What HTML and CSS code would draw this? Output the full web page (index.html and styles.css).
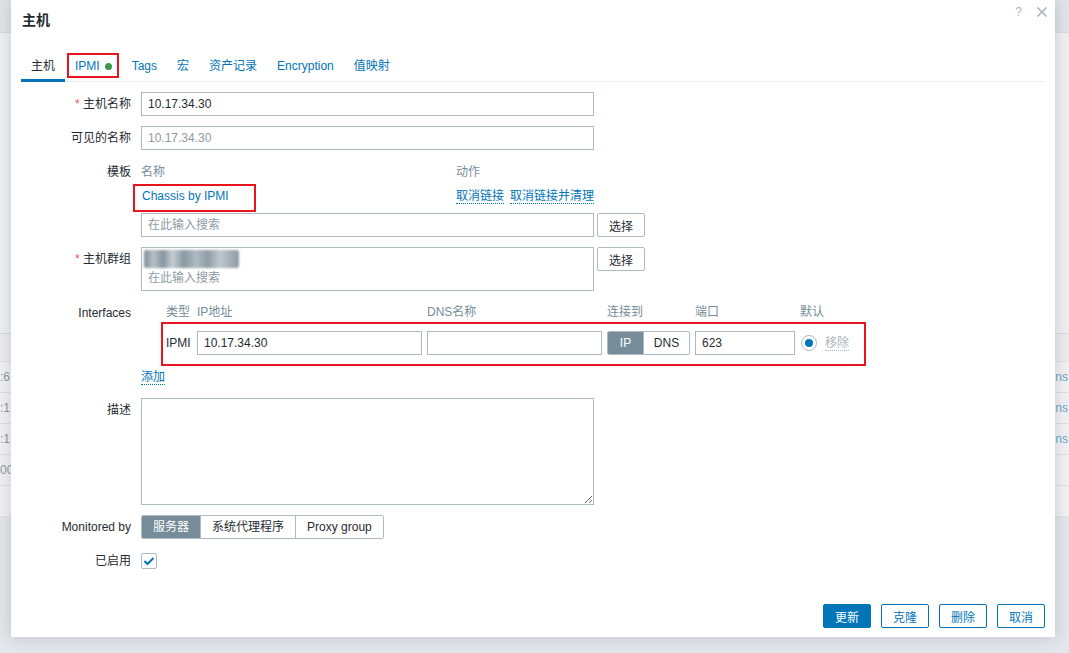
FILE: index.html
```html
<!DOCTYPE html>
<html lang="zh">
<head>
<meta charset="utf-8">
<title>主机</title>
<link rel="stylesheet" href="styles.css">
</head>
<body>
<div class="page">
  <div class="bg-header"></div>
  <div class="bg-main"></div>
  <div class="bg-thead"></div>
  <div class="bg-row"><span class="bl">:6</span><span class="br">ns</span></div>
  <div class="bg-row"><span class="bl">:1</span><span class="br">ns</span></div>
  <div class="bg-row"><span class="bl">:1</span><span class="br">ns</span></div>
  <div class="bg-row"><span class="bl">00</span><span class="br"></span></div>
  <div class="bg-row"></div>
  <div class="bg-bottom"></div>
</div>

<div class="dialog">
  <div class="dlg-head">
    <h4 class="dlg-title">主机</h4>
    <div class="dlg-ctrls">
      <span class="help">?</span>
      <svg class="close" width="12" height="12" viewBox="0 0 12 12"><path d="M1.5 1.5 L10.5 10.5 M10.5 1.5 L1.5 10.5" stroke="#a9b4bb" stroke-width="1.6" fill="none"/></svg>
    </div>
  </div>

  <div class="tabs">
    <span class="tab active">主机</span>
    <span class="tab"><span class="tab-mark">IPMI<i class="dot"></i></span></span>
    <span class="tab">Tags</span>
    <span class="tab">宏</span>
    <span class="tab">资产记录</span>
    <span class="tab">Encryption</span>
    <span class="tab">值映射</span>
  </div>

  <div class="form">
    <label class="lbl"><span class="req">*</span> 主机名称</label>
    <div class="fld"><input class="inp w453" type="text" value="10.17.34.30"></div>

    <label class="lbl">可见的名称</label>
    <div class="fld"><input class="inp w453 muted" type="text" value="10.17.34.30"></div>

    <label class="lbl lbl-tpl">模板</label>
    <div class="fld">
      <div class="tpl-head"><span class="tpl-name gray">名称</span><span class="gray">动作</span></div>
      <div class="tpl-row">
        <span class="tpl-name"><span class="marked-link"><a class="link">Chassis by IPMI</a></span></span>
        <span><a class="link dotted">取消链接</a><a class="link dotted gap6">取消链接并清理</a></span>
      </div>
      <div class="with-btn mt6">
        <input class="inp w453" type="text" placeholder="在此输入搜索">
        <button class="btn-grey">选择</button>
      </div>
    </div>

    <label class="lbl"><span class="req">*</span> 主机群组</label>
    <div class="fld">
      <div class="with-btn">
        <div class="multisel">
          <div class="chip"></div>
          <div class="ms-ph">在此输入搜索</div>
        </div>
        <button class="btn-grey">选择</button>
      </div>
    </div>

    <label class="lbl lbl-if">Interfaces</label>
    <div class="fld">
      <div class="if-head gray">
        <span class="c-type">类型</span>
        <span class="c-ip">IP地址</span>
        <span class="c-dns">DNS名称</span>
        <span class="c-conn">连接到</span>
        <span class="c-port">端口</span>
        <span class="c-def">默认</span>
      </div>
      <div class="if-row">
        <span class="c-type">IPMI</span>
        <input class="inp c-ip" type="text" value="10.17.34.30">
        <input class="inp c-dns" type="text" value="">
        <span class="c-conn seg">
          <span class="seg-item on">IP</span><span class="seg-item">DNS</span>
        </span>
        <input class="inp c-port" type="text" value="623">
        <span class="c-def">
          <span class="radio"><i></i></span>
          <a class="remove">移除</a>
        </span>
      </div>
      <div class="add-line"><a class="link dotted">添加</a></div>
    </div>

    <label class="lbl">描述</label>
    <div class="fld"><textarea class="ta"></textarea></div>

    <label class="lbl">Monitored by</label>
    <div class="fld">
      <span class="seg">
        <span class="seg-item on">服务器</span><span class="seg-item">系统代理程序</span><span class="seg-item">Proxy group</span>
      </span>
    </div>

    <label class="lbl">已启用</label>
    <div class="fld">
      <span class="check">
        <svg width="12" height="10" viewBox="0 0 12 10"><path d="M1.5 5 L4.5 8 L10.5 2" stroke="#0275b8" stroke-width="2" fill="none"/></svg>
      </span>
    </div>
  </div>

  <div class="footer">
    <button class="btn-main">更新</button>
    <button class="btn-alt">克隆</button>
    <button class="btn-alt">删除</button>
    <button class="btn-alt">取消</button>
  </div>
</div>
</body>
</html>
```

FILE: styles.css
```css
* { box-sizing: border-box; }

html, body {
  margin: 0;
  padding: 0;
}

body {
  width: 1069px;
  height: 653px;
  overflow: hidden;
  position: relative;
  font-family: "Liberation Sans", Arial, "Noto Sans CJK SC", sans-serif;
  font-size: 12px;
  color: #1f2c33;
  background: #e6e9ed;
}

/* ---------- background page (dimmed) ---------- */
.page {
  display: flex;
  flex-direction: column;
  height: 653px;
}
.bg-header { height: 33px; background: #e0e3e7; border-bottom: 1px solid #d6dadf; }
.bg-main { height: 300px; background: #eef0f2; }
.bg-thead { height: 29px; background: #eaecef; border-top: 1px solid #d3d8dd; border-bottom: 1px solid #dfe3e7; }
.bg-row {
  height: 31px;
  background: #f0f1f3;
  border-bottom: 1px solid #dde1e5;
  display: flex;
  align-items: center;
  justify-content: space-between;
  color: #8a969e;
}
.bg-row .bl { margin-left: 0; }
.bg-row .br { color: #6fa3c7; margin-right: 1px; }
.bg-bottom { flex: 1; background: #e3e6ea; }

/* ---------- dialog ---------- */
.dialog {
  position: absolute;
  left: 11px;
  top: 0;
  width: 1044px;
  height: 637px;
  background: #fff;
  box-shadow: 0 0 14px rgba(60, 70, 80, 0.22);
  display: flex;
  flex-direction: column;
}

.dlg-head {
  height: 40px;
  display: flex;
  justify-content: space-between;
  align-items: center;
  padding: 0 7px 0 11px;
}
.dlg-title {
  margin: 0;
  font-size: 14px;
  font-weight: bold;
  color: #1f2c33;
  position: relative;
  top: -1px;
}
.dlg-ctrls {
  align-self: flex-start;
  padding-top: 6px;
  display: flex;
  align-items: center;
  gap: 14px;
}
.help { color: #acb6bc; font-size: 12px; line-height: 12px; }
.close { display: block; }

/* ---------- tabs ---------- */
.tabs {
  display: flex;
  margin: 10px 10px 0;
  border-bottom: 1px solid #ebeef0;
}
.tab {
  padding: 9px 10px 6px;
  line-height: 14px;
  color: #0275b8;
  border-bottom: 3px solid transparent;
  margin-bottom: -1px;
}
.tab.active { color: #1f2c33; border-bottom-color: #0275b8; }
.tab-mark { position: relative; display: inline-flex; align-items: center; }
.tab-mark::after {
  content: "";
  position: absolute;
  left: -8px;
  right: -7px;
  top: -6px;
  bottom: -5px;
  border: 2px solid #e8161c;
}
.dot {
  display: inline-block;
  width: 7px;
  height: 7px;
  border-radius: 50%;
  background: #3d9a46;
  margin: 0 0 0 5px;
}

/* ---------- form ---------- */
.form {
  display: grid;
  grid-template-columns: 120px 1fr;
  column-gap: 10px;
  row-gap: 10px;
  padding-top: 10px;
}
.lbl {
  text-align: right;
  line-height: 24px;
  white-space: nowrap;
}
.lbl-tpl { line-height: 22px; padding-top: 1px; }
.lbl-if { line-height: 22px; padding-top: 1px; }
.req { color: #e45959; }
.fld { min-width: 0; }
.gray { color: #768d99; }

.inp {
  height: 24px;
  border: 1px solid #acbbc2;
  border-radius: 0;
  padding: 0 6px;
  font: inherit;
  color: #1f2c33;
  background: #fff;
  outline: none;
}
.inp::placeholder { color: #8e9ba3; }
.w453 { width: 453px; }
.muted { color: #8e9ba3; }

.tpl-head { display: flex; line-height: 22px; padding-top: 1px; }
.tpl-row { display: flex; line-height: 24px; padding-top: 1px; }
.tpl-name { width: 315px; flex: none; }
.marked-link { position: relative; display: inline-block; padding-left: 1px; }
.marked-link::after {
  content: "";
  position: absolute;
  left: -8px;
  top: 0;
  width: 119px;
  height: 24px;
  border: 2px solid #e8161c;
}
.link { color: #0275b8; text-decoration: none; }
.dotted { border-bottom: 1px dotted #0275b8; }
.gap6 { margin-left: 6px; }
.mt6 { margin-top: 5px; }

.with-btn { display: flex; align-items: flex-start; gap: 3px; }

.btn-grey {
  height: 24px;
  width: 48px;
  padding: 0;
  font: inherit;
  color: #1f2c33;
  background: #fff;
  border: 1px solid #acbbc2;
  border-radius: 2px;
}

.multisel {
  width: 453px;
  height: 44px;
  border: 1px solid #acbbc2;
  padding: 2px;
}
.chip {
  width: 95px;
  height: 18px;
  border-radius: 2px;
  background: linear-gradient(90deg, #7f8e9a 0%, #b7c0c7 10%, #8795a0 20%, #c6cdd2 30%, #8a98a3 42%, #b0bac1 55%, #8f9ca7 67%, #c0c8cd 80%, #8c9aa5 100%);
  filter: blur(1px);
}
.ms-ph { color: #8e9ba3; line-height: 18px; padding-left: 4px; margin-top: 1px; }

/* ---------- interfaces ---------- */
.if-head, .if-row {
  display: flex;
  align-items: center;
  gap: 5px;
  margin-left: 20px;
  padding-left: 5px;
}
.if-head { height: 21px; line-height: 20px; padding-top: 1px; }
.if-row {
  position: relative;
  width: 705px;
  height: 44px;
  padding-bottom: 2px;
}
.if-row::after {
  content: "";
  position: absolute;
  inset: 0;
  border: 2px solid #e8161c;
}
.c-type { width: 26px; flex: none; }
.c-ip { width: 225px; flex: none; }
.c-dns { width: 175px; flex: none; }
.c-conn { width: 83px; flex: none; }
.c-port { width: 100px; flex: none; }
.c-def { flex: none; display: flex; align-items: center; }

.seg {
  display: inline-flex;
  height: 24px;
  border: 1px solid #acbbc2;
  border-radius: 2px;
  overflow: hidden;
}
.seg-item {
  padding: 0 11px;
  line-height: 22px;
  border-left: 1px solid #acbbc2;
  color: #1f2c33;
  background: #fff;
  white-space: nowrap;
}
.seg-item:first-child { border-left: none; }
.seg-item.on { background: #768d99; color: #fff; }
.if-row .seg-item { flex: 1; text-align: center; padding: 0; }
.if-row .seg-item.on { flex: none; width: 35px; }

.radio {
  width: 16px;
  height: 16px;
  border-radius: 50%;
  border: 1px solid #acbbc2;
  display: flex;
  align-items: center;
  justify-content: center;
  margin-left: 1px;
}
.radio i { width: 8px; height: 8px; border-radius: 50%; background: #0275b8; }
.remove {
  margin-left: 8px;
  color: #acb6bc;
  border-bottom: 1px dotted #acb6bc;
  line-height: 14px;
}

.add-line { line-height: 22px; margin-top: 0; }

.ta {
  display: block;
  width: 453px;
  height: 107px;
  border: 1px solid #acbbc2;
  font: inherit;
  resize: both;
  margin: 0;
}

.check {
  margin-top: 4px;
  width: 16px;
  height: 16px;
  border: 1px solid #acbbc2;
  border-radius: 2px;
  display: flex;
  align-items: center;
  justify-content: center;
}
.check svg { display: block; }

/* ---------- footer ---------- */
.footer {
  margin-top: auto;
  display: flex;
  justify-content: flex-end;
  gap: 10px;
  padding: 0 10px 9px;
}
.btn-main, .btn-alt {
  width: 48px;
  height: 24px;
  padding: 0;
  font: inherit;
  border-radius: 2px;
  border: 1px solid #0275b8;
}
.btn-main { background: #0275b8; color: #fff; }
.btn-alt { background: #fff; color: #0275b8; }
```
